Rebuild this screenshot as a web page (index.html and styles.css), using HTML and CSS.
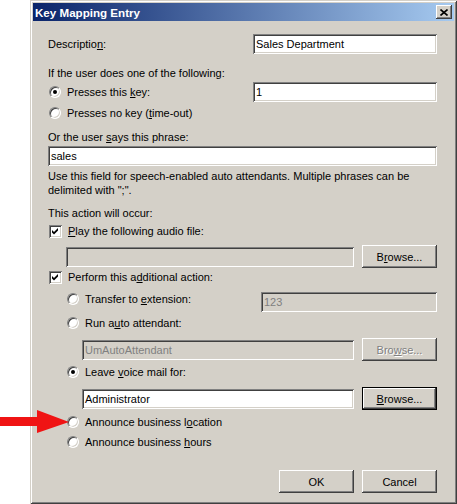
FILE: index.html
```html
<!DOCTYPE html>
<html>
<head>
<meta charset="utf-8">
<title>Key Mapping Entry</title>
<link rel="stylesheet" href="styles.css">
</head>
<body>
<div class="page">
  <div class="dialog">
    <div class="titlebar">
      <span class="title">Key Mapping Entry</span>
      <span class="close"><svg width="8" height="7" viewBox="0 0 8 7"><path d="M0.5 0.5 L7.5 6.5 M7.5 0.5 L0.5 6.5" stroke="#000" stroke-width="1.6" fill="none"/></svg></span>
    </div>
    <div class="content">
      <div class="row r-desc">
        <span>Descriptio<u>n</u>:</span>
        <div class="field w184">Sales Department</div>
      </div>
      <div class="row line r-if"><span>If the user does one of the following:</span></div>
      <div class="row r-key">
        <label class="opt"><span class="radio on"></span><span>Presses this <u>k</u>ey:</span></label>
        <div class="field w184">1</div>
      </div>
      <div class="row line r-nokey">
        <label class="opt"><span class="radio"></span><span>Presses no key (<u>t</u>ime-out)</span></label>
      </div>
      <div class="row line r-say"><span>Or the user <u>s</u>ays this phrase:</span></div>
      <div class="row r-sales"><div class="field grow">sales</div></div>
      <div class="help">Use this field for speech-enabled auto attendants. Multiple phrases can be<br>delimited with ";".</div>
      <div class="row line r-action"><span>This action will occur:</span></div>
      <div class="row line r-play">
        <label class="opt"><span class="check"><svg width="7" height="7" viewBox="0 0 7 7"><polygon points="0,2 2,4 6,0 6,2.6 2,6.6 0,4.6" fill="#000"/></svg></span><span><u>P</u>lay the following audio file:</span></label>
      </div>
      <div class="row r-audio indent1">
        <div class="field disabled w288"></div>
        <div class="btn">B<u>r</u>owse...</div>
      </div>
      <div class="row line r-perform">
        <label class="opt"><span class="check"><svg width="7" height="7" viewBox="0 0 7 7"><polygon points="0,2 2,4 6,0 6,2.6 2,6.6 0,4.6" fill="#000"/></svg></span><span>Perform this a<u>d</u>ditional action:</span></label>
      </div>
      <div class="row r-transfer indent1">
        <label class="opt sub"><span class="radio"></span><span>Transfer to <u>e</u>xtension:</span></label>
        <div class="field disabled w176">123</div>
      </div>
      <div class="row line r-run indent1">
        <label class="opt sub"><span class="radio"></span><span>Run a<u>u</u>to attendant:</span></label>
      </div>
      <div class="row r-um indent2">
        <div class="field disabled w272">UmAutoAttendant</div>
        <div class="btn disabled">Bro<u>w</u>se...</div>
      </div>
      <div class="row line r-voice indent1">
        <label class="opt sub"><span class="radio on"></span><span>Leave <u>v</u>oice mail for:</span></label>
      </div>
      <div class="row r-admin indent2">
        <div class="field w272">Administrator</div>
        <div class="btn default"><u>B</u>rowse...</div>
      </div>
      <div class="row line r-loc indent1">
        <label class="opt sub"><span class="radio"></span><span>Announce business l<u>o</u>cation</span></label>
      </div>
      <div class="row line r-hours indent1">
        <label class="opt sub"><span class="radio"></span><span>Announce business <u>h</u>ours</span></label>
      </div>
      <div class="row r-buttons">
        <div class="btn">OK</div>
        <div class="btn">Cancel</div>
      </div>
    </div>
  </div>
  <svg class="arrow" width="72" height="28" viewBox="0 0 72 28"><polygon points="0,9 37,9 37,2 69,14 37,25 37,18 0,18" fill="#f01414"/></svg>
</div>
</body>
</html>
```
FILE: styles.css
```css
* { box-sizing: border-box; }
body {
  margin: 0;
  background: #fff;
  font-family: "Liberation Sans", Arial, sans-serif;
  font-size: 11px;
  color: #000;
}
.page { position: relative; width: 457px; height: 504px; }
.dialog {
  margin-left: 30px;
  width: 427px;
  height: 504px;
  background: #d4d0c8;
  padding: 3px;
  box-shadow: inset 1px 1px #d4d0c8, inset -1px -1px #404040, inset 2px 2px #fff, inset -2px -2px #808080;
  display: flex;
  flex-direction: column;
}
.titlebar {
  height: 18px;
  background: linear-gradient(to right, #0a246a, #a6caf0);
  display: flex;
  align-items: center;
  justify-content: space-between;
  padding: 0 2px 0 2px;
  color: #fff;
  font-weight: bold;
  font-size: 11.6px;
}
.close {
  width: 16px;
  height: 14px;
  background: #d4d0c8;
  box-shadow: inset -1px -1px #404040, inset 1px 1px #fff, inset -2px -2px #808080;
  display: flex;
  align-items: center;
  justify-content: center;
}
.close svg { display: block; }
.content {
  padding: 0 17px 0 15px;
  display: flex;
  flex-direction: column;
}
.row { display: flex; align-items: center; }
.line { height: 14px; line-height: 14px; }
.indent1 { padding-left: 18px; }
.indent2 { padding-left: 34px; }
.opt { display: flex; align-items: center; gap: 6px; }
.opt.sub { gap: 6px; }
u { text-decoration: underline; text-underline-offset: 1px; }

.field {
  height: 20px;
  background: #fff;
  box-shadow: inset 1px 1px #808080, inset -1px -1px #fff, inset 2px 2px #404040, inset -2px -2px #d4d0c8;
  padding: 0 3px;
  display: flex;
  align-items: center;
  white-space: nowrap;
}
.field.disabled { background: #d4d0c8; color: #808080; }
.w184 { width: 184px; }
.w176 { width: 176px; }
.w288 { width: 288px; }
.w272 { width: 272px; }
.grow { flex: 1; }

.btn {
  width: 75px;
  height: 23px;
  display: flex;
  align-items: center;
  justify-content: center;
  background: #d4d0c8;
  box-shadow: inset -1px -1px #404040, inset 1px 1px #fff, inset -2px -2px #808080;
}
.btn.default {
  box-shadow: inset 0 0 0 1px #000, inset -2px -2px #404040, inset 2px 2px #fff, inset -3px -3px #808080;
}
.btn.disabled { color: #808080; text-shadow: 1px 1px #fff; }

.radio {
  width: 12px;
  height: 12px;
  flex: none;
  border-radius: 50%;
  background: #fff;
  border: 1px solid;
  border-color: #808080 #fff #fff #808080;
  box-shadow: inset 1px 1px #404040, inset -1px -1px #d4d0c8;
  position: relative;
  margin-left: 1px;
}
.radio.on::after {
  content: "";
  position: absolute;
  left: 3px;
  top: 3px;
  width: 4px;
  height: 4px;
  border-radius: 50%;
  background: #000;
}
.check {
  width: 13px;
  height: 13px;
  flex: none;
  background: #fff;
  box-shadow: inset 1px 1px #808080, inset -1px -1px #fff, inset 2px 2px #404040, inset -2px -2px #d4d0c8;
  display: flex;
  align-items: center;
  justify-content: center;
  margin-left: 1px;
}
.check svg { display: block; }

.r-desc { margin-top: 13px; height: 20px; justify-content: space-between; }
.r-if { margin-top: 12px; }
.r-key { margin-top: 2px; height: 20px; justify-content: space-between; }
.r-nokey { margin-top: 4px; }
.r-say { margin-top: 10px; }
.r-sales { margin-top: 2px; }
.help { margin-top: 3px; line-height: 14px; }
.r-action { margin-top: 9px; }
.r-play { margin-top: 4px; }
.r-audio { margin-top: 7px; height: 23px; gap: 8px; }
.r-perform { margin-top: 2px; }
.r-transfer { margin-top: 8px; height: 20px; align-items: flex-start; justify-content: space-between; }
.r-transfer .opt { height: 14px; }
.r-run { margin-top: 4px; }
.r-um { margin-top: 8px; height: 23px; gap: 8px; }
.r-voice { margin-top: 4px; }
.r-admin { margin-top: 8px; height: 23px; gap: 8px; }
.r-loc { margin-top: 5px; }
.r-hours { margin-top: 6px; }
.r-buttons { margin-top: 21px; justify-content: flex-end; gap: 8px; }

.arrow { position: absolute; left: 0; top: 408px; display: block; }
```
